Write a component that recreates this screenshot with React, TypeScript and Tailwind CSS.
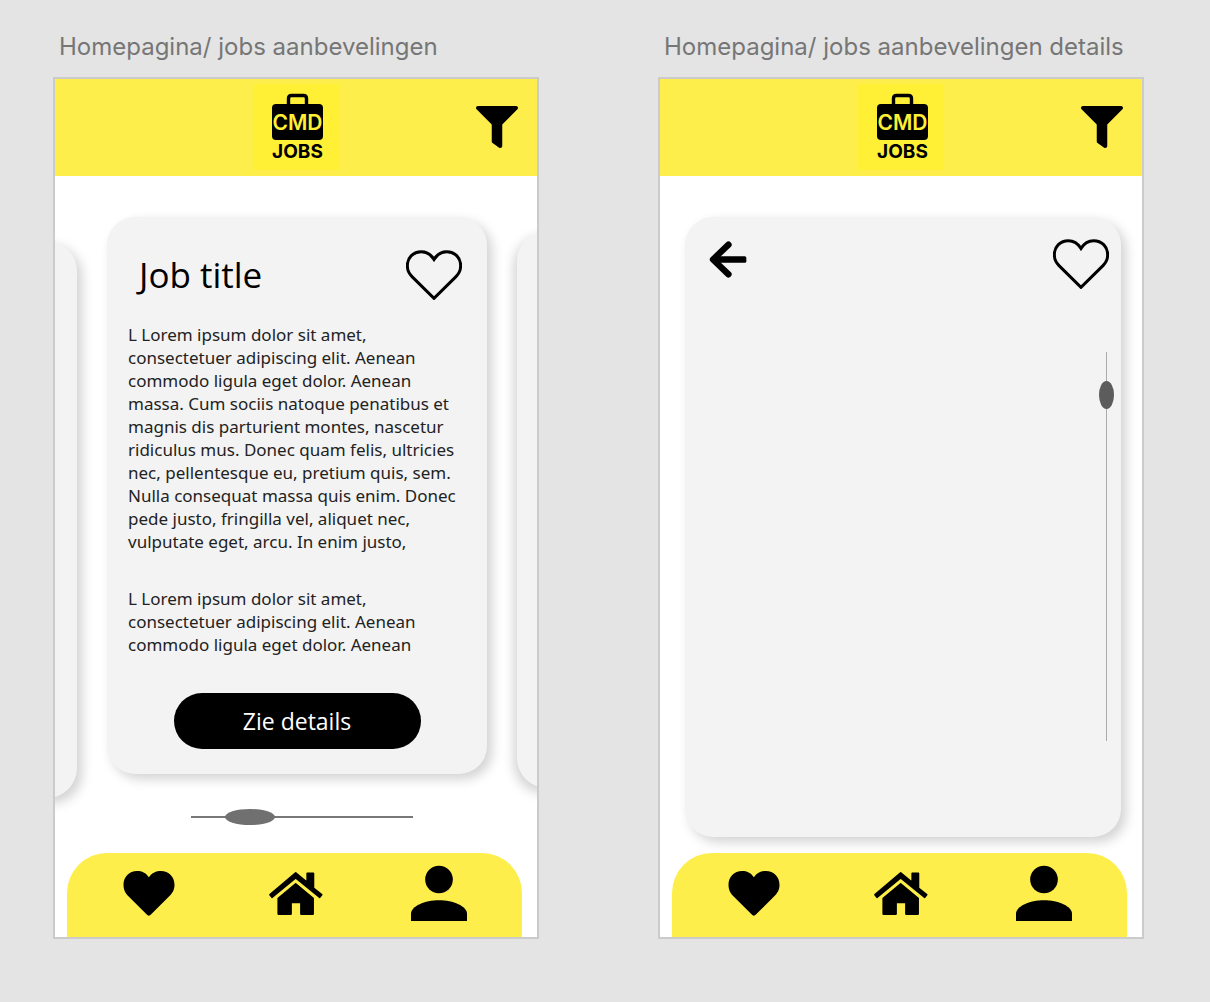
import type { ReactNode } from "react";
import { FaFilter } from "react-icons/fa";

const INTRO = `L Lorem ipsum dolor sit amet,
consectetuer adipiscing elit. Aenean
commodo ligula eget dolor. Aenean
massa. Cum sociis natoque penatibus et
magnis dis parturient montes, nascetur
ridiculus mus. Donec quam felis, ultricies
nec, pellentesque eu, pretium quis, sem.
Nulla consequat massa quis enim. Donec
pede justo, fringilla vel, aliquet nec,
vulputate eget, arcu. In enim justo,`;

const MORE = `L Lorem ipsum dolor sit amet,
consectetuer adipiscing elit. Aenean
commodo ligula eget dolor. Aenean`;

function Logo() {
  return (
    <svg viewBox="0 0 86 86" className="size-[86px] bg-[#fff036]" role="img" aria-label="CMD Jobs">
      <path d="M35.500 24V14.500Q35.500 11.500 38.500 11.500H50.500Q53.500 11.500 53.500 14.500V24" fill="none" stroke="#000" strokeWidth="3.400" />
      <rect x="19" y="20" width="51" height="36" rx="4" />
      <text x="44.500" y="46" textAnchor="middle" fontSize="21" className="fill-[#fff036] font-['Inter'] font-semibold">CMD</text>
      <text x="44.500" y="74" textAnchor="middle" fontSize="19" className="fill-black font-['Inter'] font-bold">JOBS</text>
    </svg>
  );
}

function HeartOutline() {
  return (
    <svg viewBox="38 42 168 150" className="h-[50px] w-14" aria-hidden="true">
      <path
        d="M122 70C112 54 99 47 84 47C60 47 42 65 42 89C42 103 48 114 56 122L122 187L188 122C196 114 202 103 202 89C202 65 184 47 160 47C145 47 132 54 122 70Z"
        fill="none"
        stroke="#000"
        strokeWidth="9"
      />
    </svg>
  );
}

function HeartSolid() {
  return (
    <svg viewBox="38 61 155 138" className="h-[46px] w-[52px]" aria-hidden="true">
      <path d="M115 83C106 69 94 64 80 64C56 64 39 82 39 105C39 122 46 132 56 142L108 194Q115 202 122 194L174 142C185 131 192 122 192 105C192 82 175 64 151 64C137 64 125 69 115 83Z" />
    </svg>
  );
}

function House() {
  return (
    <svg viewBox="477 63 164 132" className="h-11 w-[54px]" aria-hidden="true">
      <g stroke="#000" strokeWidth="5" strokeLinejoin="round">
        <path d="M558 68L593 97V69H612V114L637 134L631 142L558 83L486 142L480 134Z" />
        <path d="M558 101L611 145V193H574V158H544V193H505V145Z" />
      </g>
    </svg>
  );
}

function Person() {
  return (
    <svg viewBox="33 45 170 170" className="size-14" aria-hidden="true">
      <circle cx="118" cy="89" r="42" />
      <path d="M33 215V193C33 170 75 152 118 152C161 152 203 170 203 193V215Z" />
    </svg>
  );
}

function ArrowLeft() {
  return (
    <svg viewBox="176 661 115 112" className="h-[37px] w-[38px]" aria-hidden="true">
      <path d="M235 672L188 717L235 762" fill="none" stroke="#000" strokeWidth="19" strokeLinecap="round" strokeLinejoin="round" />
      <rect x="188" y="707" width="101" height="20" rx="5" />
    </svg>
  );
}

function Screen({ title, children }: { title: string; children: ReactNode }) {
  return (
    <section className="min-w-0">
      <h2 className="mb-3.5 pl-1.5 font-['Inter',sans-serif] text-2xl leading-8 whitespace-nowrap text-[#767676]">
        {title}
      </h2>
      <div className="overflow-hidden border-2 border-[#cbcbcb] bg-white">
        <header className="grid grid-cols-[1fr_auto_1fr] items-center bg-[#feee4b] pt-[5px] pb-1.5">
          <div className="col-start-2">
            <Logo />
          </div>
          <button type="button" aria-label="Filter" className="mr-[19px] justify-self-end">
            <FaFilter className="size-[42px]" />
          </button>
        </header>
        {children}
        <nav className="relative mr-[15px] ml-3 flex items-center justify-between rounded-t-[40px] bg-[#feee4b] pt-3 pr-[55px] pb-4 pl-14">
          <a href="#favorieten" aria-label="Favorieten"><HeartSolid /></a>
          <a href="#home" aria-label="Home" className="ml-1.5"><House /></a>
          <a href="#profiel" aria-label="Profiel"><Person /></a>
        </nav>
      </div>
    </section>
  );
}

function RecommendationsScreen() {
  return (
    <Screen title="Homepagina/ jobs aanbevelingen">
      <main>
        <div className="flex gap-[30px] pt-[41px]">
          <div className="mt-6 -mb-6 -ml-[58px] w-20 shrink-0 rounded-[30px] bg-[#f3f3f3] shadow-[5px_5px_12px_rgba(0,0,0,0.18)]" />
          <article className="min-w-0 flex-1 rounded-[28px] bg-[#f3f3f3] pt-[33px] pb-[25px] shadow-[5px_5px_12px_rgba(0,0,0,0.18)]">
            <div className="flex items-center justify-between pr-[25px] pl-8">
              <h3 className="text-[35px] leading-10">Job title</h3>
              <button type="button" aria-label="Bewaar"><HeartOutline /></button>
            </div>
            <p className="mt-[23px] pl-[21px] font-['Noto_Sans',sans-serif] text-[17px] leading-[23px] whitespace-pre text-[#222]">{INTRO}</p>
            <p className="mt-[34px] pl-[21px] font-['Noto_Sans',sans-serif] text-[17px] leading-[23px] whitespace-pre text-[#222]">{MORE}</p>
            <button type="button" className="mx-auto mt-[37px] block h-14 w-[65%] rounded-full bg-black text-[23px] text-white">
              Zie details
            </button>
          </article>
          <div className="mt-3.5 -mr-[60px] -mb-3.5 w-20 shrink-0 rounded-[30px] bg-[#f3f3f3] shadow-[-3px_5px_12px_rgba(0,0,0,0.18)]" />
        </div>
        <div className="pt-[35px] pr-[124px] pb-[29px] pl-[136px]">
          <input
            type="range"
            aria-label="Blader door jobs"
            defaultValue={20}
            className="block h-[15px] w-full appearance-none bg-transparent [&::-webkit-slider-runnable-track]:h-[2px] [&::-webkit-slider-runnable-track]:bg-[#777] [&::-webkit-slider-thumb]:-mt-[7px] [&::-webkit-slider-thumb]:h-4 [&::-webkit-slider-thumb]:w-[50px] [&::-webkit-slider-thumb]:appearance-none [&::-webkit-slider-thumb]:rounded-[50%] [&::-webkit-slider-thumb]:bg-[#707070]"
          />
        </div>
      </main>
    </Screen>
  );
}

function DetailsScreen() {
  return (
    <Screen title="Homepagina/ jobs aanbevelingen details">
      <main className="pt-[41px] pr-[21px] pb-4 pl-[25px]">
        <article className="rounded-[28px] bg-[#f3f3f3] pt-[22px] pb-24 shadow-[5px_5px_12px_rgba(0,0,0,0.18)]">
          <div className="flex items-start justify-between pr-3 pl-6">
            <button type="button" aria-label="Terug" className="mt-0.5"><ArrowLeft /></button>
            <button type="button" aria-label="Bewaar"><HeartOutline /></button>
          </div>
          <div className="mt-[63px] flex justify-end pr-[7px]">
            <input
              type="range"
              aria-label="Scroll"
              defaultValue={8}
              className="block h-[389px] w-[15px] appearance-none bg-transparent [writing-mode:vertical-lr] [&::-webkit-slider-runnable-track]:w-px [&::-webkit-slider-runnable-track]:bg-[#aaa] [&::-webkit-slider-thumb]:-ml-[7px] [&::-webkit-slider-thumb]:h-7 [&::-webkit-slider-thumb]:w-[15px] [&::-webkit-slider-thumb]:appearance-none [&::-webkit-slider-thumb]:rounded-[50%] [&::-webkit-slider-thumb]:bg-[#5c5c5c]"
            />
          </div>
        </article>
      </main>
    </Screen>
  );
}

export default function App() {
  return (
    <div className="grid min-h-screen grid-cols-2 items-start gap-[119px] bg-[#e4e4e4] pt-[31px] pr-[66px] pb-[60px] pl-[53px] font-['Open_Sans',sans-serif] text-black">
      <RecommendationsScreen />
      <DetailsScreen />
    </div>
  );
}
